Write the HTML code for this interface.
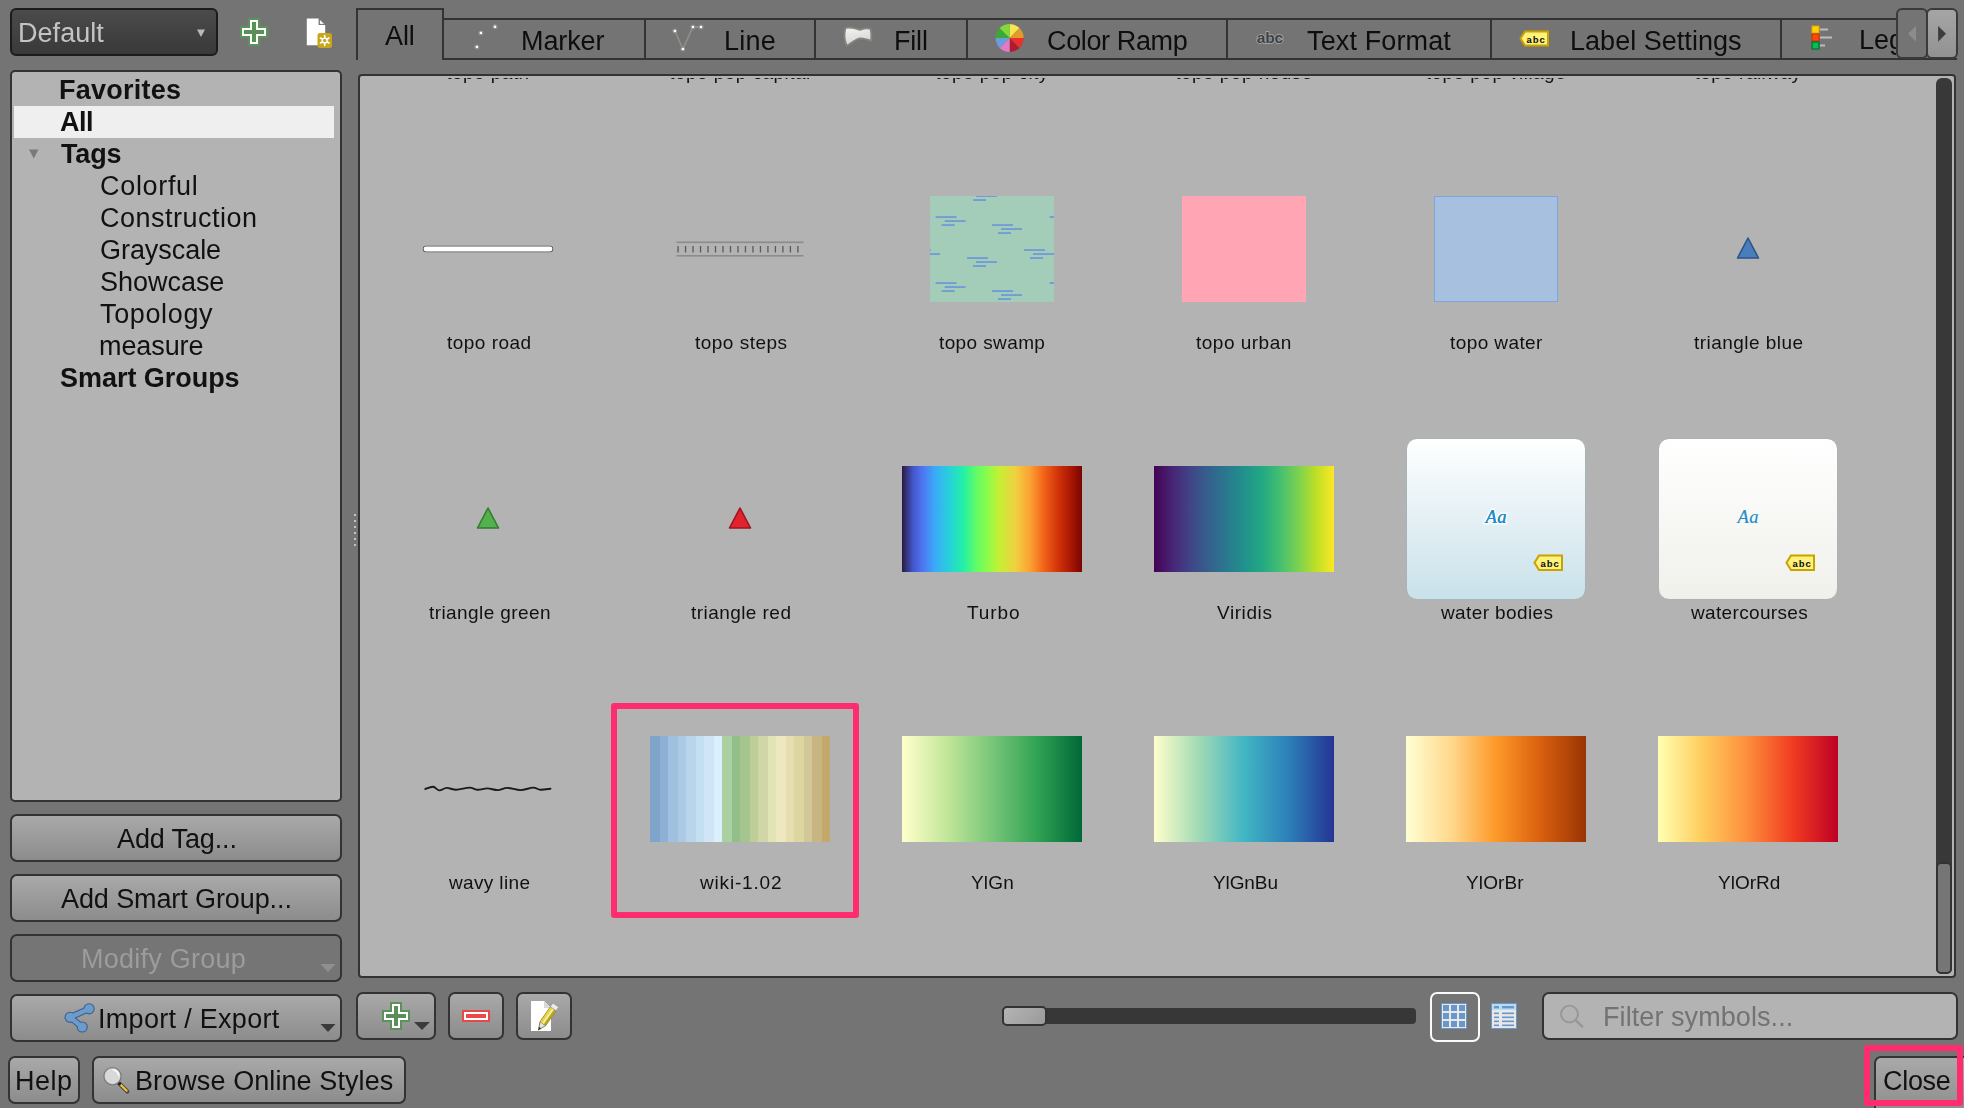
<!DOCTYPE html>
<html><head><meta charset="utf-8"><title>Style Manager</title>
<style>
html,body{margin:0;padding:0;}
body{width:1964px;height:1108px;overflow:hidden;position:relative;background:#747474;font-family:"Liberation Sans", sans-serif;}
.t{position:absolute;white-space:nowrap;will-change:transform;}
</style></head><body>
<div style="position:absolute;left:10px;top:8px;width:208px;height:48px;box-sizing:border-box;border:2px solid #1c1c1c;border-radius:6px;background:linear-gradient(#4b4b4b,#393939);"></div>
<div class="t" style="left:17.94px;top:20.00px;font-size:27px;line-height:27px;font-weight:400;color:#c4c4c4;letter-spacing:0.045px;">Default</div>
<svg style="position:absolute;left:196px;top:28px" width="10" height="10"><path d="M1 1.5 L9 1.5 L5 9 Z" fill="#b9b9b9"/></svg>
<svg style="position:absolute;left:240px;top:18px" width="28" height="28"><polygon points="8.0,0.0 20.0,0.0 20.0,8.0 28.0,8.0 28.0,20.0 20.0,20.0 20.0,28.0 8.0,28.0 8.0,20.0 0.0,20.0 0.0,8.0 8.0,8.0" fill="#5b925b"/><polygon points="10.0,2.0 18.0,2.0 18.0,10.0 26.0,10.0 26.0,18.0 18.0,18.0 18.0,26.0 10.0,26.0 10.0,18.0 2.0,18.0 2.0,10.0 10.0,10.0" fill="#ffffff"/><polygon points="12.0,4.0 16.0,4.0 16.0,12.0 24.0,12.0 24.0,16.0 16.0,16.0 16.0,24.0 12.0,24.0 12.0,16.0 4.0,16.0 4.0,12.0 12.0,12.0" fill="#5a8f5a"/></svg>
<svg style="position:absolute;left:305px;top:17px" width="30" height="33">
<path d="M1.8 1.4 H13.6 V7.9 H20.2 V28.3 H1.8 Z" fill="#ffffff"/>
<path d="M14.5 2.2 L14.5 7.3 L19.9 7.3 Z" fill="#fff" stroke="#606060" stroke-width="0.6" stroke-linejoin="round"/>
<rect x="12.5" y="16" width="14.5" height="15" rx="2.5" fill="#c9a51c"/>
<g stroke="#fff" stroke-width="1.6" stroke-linecap="round"><line x1="19.7" y1="18.5" x2="19.7" y2="28.5"/><line x1="15.4" y1="21" x2="24" y2="26"/><line x1="15.4" y1="26" x2="24" y2="21"/></g>
<circle cx="19.7" cy="23.5" r="2.4" fill="#c9a51c" stroke="#fff" stroke-width="1.4"/>
</svg>
<div style="position:absolute;left:356px;top:58px;width:1601px;height:2px;background:#333;"></div>
<div style="position:absolute;left:356px;top:8px;width:88px;height:52px;box-sizing:border-box;border:2px solid #333;border-bottom:none;background:#747474;"></div>
<div class="t" style="left:385.34px;top:22.90px;font-size:27px;line-height:27px;font-weight:400;color:#0e0e0e;letter-spacing:-0.071px;">All</div>
<div style="position:absolute;left:442px;top:18px;width:1456px;height:2px;background:#333;"></div>
<div style="position:absolute;left:644px;top:18px;width:2px;height:42px;background:#333;"></div>
<div style="position:absolute;left:814px;top:18px;width:2px;height:42px;background:#333;"></div>
<div style="position:absolute;left:966px;top:18px;width:2px;height:42px;background:#333;"></div>
<div style="position:absolute;left:1226px;top:18px;width:2px;height:42px;background:#333;"></div>
<div style="position:absolute;left:1490px;top:18px;width:2px;height:42px;background:#333;"></div>
<div style="position:absolute;left:1780px;top:18px;width:2px;height:42px;background:#333;"></div>
<svg style="position:absolute;left:468px;top:18px" width="36" height="36"><circle cx="27" cy="8.8" r="2.5" fill="#8f918b"/><rect x="25.9" y="7.700000000000001" width="2.2" height="2.2" fill="#fff"/><circle cx="12.9" cy="14.9" r="2.5" fill="#8f918b"/><rect x="11.8" y="13.8" width="2.2" height="2.2" fill="#fff"/><circle cx="8.9" cy="28.9" r="2.5" fill="#8f918b"/><rect x="7.800000000000001" y="27.799999999999997" width="2.2" height="2.2" fill="#fff"/></svg>
<div class="t" style="left:521.44px;top:27.60px;font-size:27px;line-height:27px;font-weight:400;color:#0e0e0e;letter-spacing:-0.112px;">Marker</div>
<svg style="position:absolute;left:666px;top:18px" width="42" height="40"><polyline points="8.9,13 16.9,31 26.9,9 35,9" fill="none" stroke="#8c8e88" stroke-width="1.8"/><circle cx="8.9" cy="13" r="2.5" fill="#8f918b"/><rect x="7.800000000000001" y="11.9" width="2.2" height="2.2" fill="#fff"/><circle cx="16.9" cy="31" r="2.5" fill="#8f918b"/><rect x="15.799999999999999" y="29.9" width="2.2" height="2.2" fill="#fff"/><circle cx="26.9" cy="9" r="2.5" fill="#8f918b"/><rect x="25.799999999999997" y="7.9" width="2.2" height="2.2" fill="#fff"/><circle cx="35" cy="9" r="2.5" fill="#8f918b"/><rect x="33.9" y="7.9" width="2.2" height="2.2" fill="#fff"/></svg>
<div class="t" style="left:723.54px;top:27.80px;font-size:27px;line-height:27px;font-weight:400;color:#0e0e0e;letter-spacing:0.229px;">Line</div>
<svg style="position:absolute;left:840px;top:24px" width="36" height="26">
<defs><linearGradient id="fg" x1="0" y1="0" x2="0.3" y2="1"><stop offset="0" stop-color="#f4f4f4"/><stop offset="1" stop-color="#d4d4d4"/></linearGradient></defs>
<path d="M5.5 4 C10 2.6 15 4 20 5.8 C24 4.5 27 4 30.5 4.8 C31.6 9 31.6 13 31.2 16.6 C27 16 24 14.3 20.5 14.3 C16 14.5 11 19.5 6.7 21.8 C4.3 16 4 9 5.5 4 Z" fill="url(#fg)" stroke="#85857d" stroke-width="1.8" stroke-linejoin="round"/></svg>
<div class="t" style="left:893.54px;top:27.80px;font-size:27px;line-height:27px;font-weight:400;color:#0e0e0e;letter-spacing:-0.193px;">Fill</div>
<svg style="position:absolute;left:990px;top:18px" width="40" height="40"><path d="M19.6 20 L19.60 6.00 A14 14 0 0 1 29.50 10.10 Z" fill="#f7e64e"/><path d="M19.6 20 L29.50 10.10 A14 14 0 0 1 33.60 20.00 Z" fill="#e39a2c"/><path d="M19.6 20 L33.60 20.00 A14 14 0 0 1 29.50 29.90 Z" fill="#e8302e"/><path d="M19.6 20 L29.50 29.90 A14 14 0 0 1 19.60 34.00 Z" fill="#b01b2d"/><path d="M19.6 20 L19.60 34.00 A14 14 0 0 1 9.70 29.90 Z" fill="#e37ac9"/><path d="M19.6 20 L9.70 29.90 A14 14 0 0 1 5.60 20.00 Z" fill="#6d9cdc"/><path d="M19.6 20 L5.60 20.00 A14 14 0 0 1 9.70 10.10 Z" fill="#3aa93a"/><path d="M19.6 20 L9.70 10.10 A14 14 0 0 1 19.60 6.00 Z" fill="#83d93a"/></svg>
<div class="t" style="left:1046.51px;top:27.80px;font-size:27px;line-height:27px;font-weight:400;color:#0e0e0e;letter-spacing:-0.369px;">Color Ramp</div>
<svg style="position:absolute;left:1254px;top:26px" width="32" height="20"><text x="2.8" y="16.6" font-family="Liberation Sans" font-weight="700" font-size="15.5" fill="#3a4045" stroke="#a8aca8" stroke-width="1.5" paint-order="stroke" letter-spacing="-0.2">abc</text></svg>
<div class="t" style="left:1306.67px;top:27.80px;font-size:27px;line-height:27px;font-weight:400;color:#0e0e0e;letter-spacing:0.134px;">Text Format</div>
<svg style="position:absolute;left:1519px;top:29.5px" width="31" height="17.5"><path d="M6 1.5 H29 V15.5 H6 L1.5 8.5 Z" fill="#fff27a" stroke="#c9a200" stroke-width="2"/><text x="10.1 16.6 23.1" y="12.9" text-anchor="middle" font-family="Liberation Mono" font-weight="700" font-size="9.8" fill="#111">abc</text></svg>
<div class="t" style="left:1570.04px;top:27.80px;font-size:27px;line-height:27px;font-weight:400;color:#0e0e0e;letter-spacing:0.031px;">Label Settings</div>
<svg style="position:absolute;left:1810px;top:24px" width="24" height="28">
<rect x="2" y="2" width="7" height="7" fill="#ffd200" stroke="#e8a000" stroke-width="1"/>
<rect x="2" y="10" width="7" height="7" fill="#ff4a00" stroke="#c83000" stroke-width="1"/>
<rect x="2" y="18" width="7" height="7" fill="#00c050" stroke="#006030" stroke-width="1"/>
<rect x="10" y="4.5" width="8" height="2" fill="#bdbdbd"/><rect x="10" y="12.5" width="12" height="2" fill="#bdbdbd"/><rect x="10" y="20.5" width="5" height="2" fill="#bdbdbd"/></svg>
<div style="position:absolute;left:1836px;top:20px;width:60px;height:38px;overflow:hidden;"><div class="t" style="left:23px;top:7.14px;font-size:27px;line-height:27px;font-weight:400;color:#0e0e0e;letter-spacing:0px;font-family:'Liberation Sans', sans-serif;">Legend</div></div>
<div style="position:absolute;left:1896px;top:8px;width:32px;height:51px;box-sizing:border-box;border:2px solid #3a3a3a;border-radius:6px;background:#747474;"></div>
<div style="position:absolute;left:1926px;top:8px;width:32px;height:51px;box-sizing:border-box;border:2px solid #3a3a3a;border-radius:6px;background:linear-gradient(#a5a5a5,#929292);"></div>
<svg style="position:absolute;left:1906px;top:24px" width="12" height="20"><path d="M10 1.9 L10 17.7 L2.1 9.8 Z" fill="#8c8c8c"/></svg>
<svg style="position:absolute;left:1936px;top:24px" width="12" height="20"><path d="M2.1 1.9 L2.1 17.7 L10 9.8 Z" fill="#3c3c3c"/></svg>
<div style="position:absolute;left:10px;top:70px;width:332px;height:732px;box-sizing:border-box;border:2px solid #333;border-radius:5px;background:#b3b3b3;"></div>
<div style="position:absolute;left:14px;top:106px;width:320px;height:32px;background:#efefef;"></div>
<div class="t" style="left:59.23px;top:77.00px;font-size:27px;line-height:27px;font-weight:700;color:#111;letter-spacing:0.257px;">Favorites</div>
<div class="t" style="left:60.20px;top:109.00px;font-size:27px;line-height:27px;font-weight:700;color:#111;letter-spacing:-0.514px;">All</div>
<div class="t" style="left:61.03px;top:141.00px;font-size:27px;line-height:27px;font-weight:700;color:#111;letter-spacing:-0.182px;">Tags</div>
<div class="t" style="left:100.41px;top:173.00px;font-size:27px;line-height:27px;font-weight:400;color:#111;letter-spacing:0.683px;">Colorful</div>
<div class="t" style="left:100.01px;top:205.00px;font-size:27px;line-height:27px;font-weight:400;color:#111;letter-spacing:0.484px;">Construction</div>
<div class="t" style="left:100.01px;top:237.00px;font-size:27px;line-height:27px;font-weight:400;color:#111;letter-spacing:-0.05px;">Grayscale</div>
<div class="t" style="left:100.01px;top:269.00px;font-size:27px;line-height:27px;font-weight:400;color:#111;letter-spacing:-0.029px;">Showcase</div>
<div class="t" style="left:100.37px;top:301.00px;font-size:27px;line-height:27px;font-weight:400;color:#111;letter-spacing:0.637px;">Topology</div>
<div class="t" style="left:99.21px;top:333.00px;font-size:27px;line-height:27px;font-weight:400;color:#111;letter-spacing:-0.097px;">measure</div>
<div class="t" style="left:59.91px;top:365.00px;font-size:27px;line-height:27px;font-weight:700;color:#111;letter-spacing:-0.039px;">Smart Groups</div>
<svg style="position:absolute;left:28px;top:148px" width="12" height="12"><path d="M1 1.5 L10.5 1.5 L5.75 10.5 Z" fill="#7a7a7a"/></svg>
<div style="position:absolute;left:10px;top:814px;width:332px;height:48px;box-sizing:border-box;border:2px solid #333;border-radius:7px;background:linear-gradient(#a9a9a9,#8c8c8c);"></div>
<div class="t" style="left:116.74px;top:825.50px;font-size:27px;line-height:27px;font-weight:400;color:#111;letter-spacing:-0.128px;">Add Tag...</div>
<div style="position:absolute;left:10px;top:874px;width:332px;height:48px;box-sizing:border-box;border:2px solid #333;border-radius:7px;background:linear-gradient(#a9a9a9,#8c8c8c);"></div>
<div class="t" style="left:61.14px;top:885.50px;font-size:27px;line-height:27px;font-weight:400;color:#111;letter-spacing:-0.101px;">Add Smart Group...</div>
<div style="position:absolute;left:10px;top:934px;width:332px;height:48px;box-sizing:border-box;border:2px solid #333;border-radius:7px;background:#757575;"></div>
<div class="t" style="left:81.14px;top:945.50px;font-size:27px;line-height:27px;font-weight:400;color:#9c9c9c;letter-spacing:0.25px;">Modify Group</div>
<svg style="position:absolute;left:320px;top:963px" width="16" height="10"><path d="M0.5 1 L15.5 1 L8 9 Z" fill="#8f8f8f"/></svg>
<div style="position:absolute;left:10px;top:994px;width:332px;height:48px;box-sizing:border-box;border:2px solid #333;border-radius:7px;background:linear-gradient(#a9a9a9,#8c8c8c);"></div>
<div class="t" style="left:98.29px;top:1006.00px;font-size:27px;line-height:27px;font-weight:400;color:#111;letter-spacing:0.302px;">Import / Export</div>
<svg style="position:absolute;left:320px;top:1023px" width="16" height="10"><path d="M0.5 1 L15.5 1 L8 9 Z" fill="#3a3a3a"/></svg>
<svg style="position:absolute;left:62px;top:1000px" width="34" height="36">
<g stroke="#3e5f86" stroke-width="6.6" stroke-linecap="round"><line x1="8.1" y1="17.3" x2="27.1" y2="8.8"/><line x1="8.1" y1="17.3" x2="20.2" y2="27"/></g>
<g fill="#3e5f86"><circle cx="27.1" cy="8.8" r="5.6"/><circle cx="8.1" cy="17.3" r="5.6"/><circle cx="20.2" cy="27" r="5.6"/></g>
<g stroke="#6c9bcd" stroke-width="4.4" stroke-linecap="round"><line x1="8.1" y1="17.3" x2="27.1" y2="8.8"/><line x1="8.1" y1="17.3" x2="20.2" y2="27"/></g>
<g fill="#6c9bcd"><circle cx="27.1" cy="8.8" r="4.5"/><circle cx="8.1" cy="17.3" r="4.5"/><circle cx="20.2" cy="27" r="4.5"/></g></svg>
<div style="position:absolute;left:354px;top:514px;width:2px;height:2px;background:#c3c3c3;"></div>
<div style="position:absolute;left:354px;top:520px;width:2px;height:2px;background:#c3c3c3;"></div>
<div style="position:absolute;left:354px;top:526px;width:2px;height:2px;background:#c3c3c3;"></div>
<div style="position:absolute;left:354px;top:532px;width:2px;height:2px;background:#c3c3c3;"></div>
<div style="position:absolute;left:354px;top:538px;width:2px;height:2px;background:#c3c3c3;"></div>
<div style="position:absolute;left:354px;top:544px;width:2px;height:2px;background:#c3c3c3;"></div>
<div style="position:absolute;left:358px;top:74px;width:1598px;height:904px;box-sizing:border-box;border:2px solid #333;border-radius:4px;background:#b3b3b3;"></div>
<div style="position:absolute;left:1936px;top:78px;width:16px;height:896px;background:#383838;border-radius:6px;"></div>
<div style="position:absolute;left:1936px;top:862px;width:16px;height:112px;box-sizing:border-box;border:2px solid #333;border-radius:5px;background:#767676;"></div>
<div style="position:absolute;left:360px;top:78px;width:1576px;height:898px;overflow:hidden;"><div style="position:absolute;left:-360px;top:-78px;width:1964px;height:1108px;"><div class="t" style="left:447.03px;top:333.00px;font-size:19px;line-height:19px;font-weight:400;color:#111;letter-spacing:0.482px;">topo road</div><div class="t" style="left:695.13px;top:333.00px;font-size:19px;line-height:19px;font-weight:400;color:#111;letter-spacing:0.487px;">topo steps</div><div class="t" style="left:938.83px;top:333.00px;font-size:19px;line-height:19px;font-weight:400;color:#111;letter-spacing:0.385px;">topo swamp</div><div class="t" style="left:1196.33px;top:333.00px;font-size:19px;line-height:19px;font-weight:400;color:#111;letter-spacing:0.494px;">topo urban</div><div class="t" style="left:1450.43px;top:333.00px;font-size:19px;line-height:19px;font-weight:400;color:#111;letter-spacing:0.407px;">topo water</div><div class="t" style="left:1694.23px;top:333.00px;font-size:19px;line-height:19px;font-weight:400;color:#111;letter-spacing:0.468px;">triangle blue</div><div class="t" style="left:428.53px;top:603.00px;font-size:19px;line-height:19px;font-weight:400;color:#111;letter-spacing:0.413px;">triangle green</div><div class="t" style="left:691.23px;top:603.00px;font-size:19px;line-height:19px;font-weight:400;color:#111;letter-spacing:0.445px;">triangle red</div><div class="t" style="left:966.61px;top:603.00px;font-size:19px;line-height:19px;font-weight:400;color:#111;letter-spacing:0.884px;">Turbo</div><div class="t" style="left:1216.64px;top:603.00px;font-size:19px;line-height:19px;font-weight:400;color:#111;letter-spacing:0.582px;">Viridis</div><div class="t" style="left:1441.27px;top:603.00px;font-size:19px;line-height:19px;font-weight:400;color:#111;letter-spacing:0.386px;">water bodies</div><div class="t" style="left:1690.67px;top:603.00px;font-size:19px;line-height:19px;font-weight:400;color:#111;letter-spacing:0.341px;">watercourses</div><div class="t" style="left:448.87px;top:873.00px;font-size:19px;line-height:19px;font-weight:400;color:#111;letter-spacing:0.351px;">wavy line</div><div class="t" style="left:700.47px;top:873.00px;font-size:19px;line-height:19px;font-weight:400;color:#111;letter-spacing:0.823px;">wiki-1.02</div><div class="t" style="left:971.26px;top:873.00px;font-size:19px;line-height:19px;font-weight:400;color:#111;letter-spacing:0.174px;">YlGn</div><div class="t" style="left:1212.66px;top:873.00px;font-size:19px;line-height:19px;font-weight:400;color:#111;letter-spacing:-0.105px;">YlGnBu</div><div class="t" style="left:1466.46px;top:873.00px;font-size:19px;line-height:19px;font-weight:400;color:#111;letter-spacing:0.134px;">YlOrBr</div><div class="t" style="left:1717.66px;top:873.00px;font-size:19px;line-height:19px;font-weight:400;color:#111;letter-spacing:0.024px;">YlOrRd</div><div class="t" style="left:-12px;width:1000px;text-align:center;top:63.11px;font-size:19px;line-height:19px;font-weight:400;color:#111;letter-spacing:0.45px;font-family:'Liberation Sans', sans-serif;">topo path</div><div class="t" style="left:240px;width:1000px;text-align:center;top:63.11px;font-size:19px;line-height:19px;font-weight:400;color:#111;letter-spacing:0.45px;font-family:'Liberation Sans', sans-serif;">topo pop capital</div><div class="t" style="left:492px;width:1000px;text-align:center;top:63.11px;font-size:19px;line-height:19px;font-weight:400;color:#111;letter-spacing:0.45px;font-family:'Liberation Sans', sans-serif;">topo pop city</div><div class="t" style="left:744px;width:1000px;text-align:center;top:63.11px;font-size:19px;line-height:19px;font-weight:400;color:#111;letter-spacing:0.45px;font-family:'Liberation Sans', sans-serif;">topo pop house</div><div class="t" style="left:996px;width:1000px;text-align:center;top:63.11px;font-size:19px;line-height:19px;font-weight:400;color:#111;letter-spacing:0.45px;font-family:'Liberation Sans', sans-serif;">topo pop village</div><div class="t" style="left:1248px;width:1000px;text-align:center;top:63.11px;font-size:19px;line-height:19px;font-weight:400;color:#111;letter-spacing:0.45px;font-family:'Liberation Sans', sans-serif;">topo railway</div><div style="position:absolute;left:902px;top:466px;width:180px;height:106px;background:linear-gradient(90deg,#2a1a40 0%,#4455c8 6%,#4f72f0 11%,#3ba8f8 18%,#28d0dc 26%,#22f0a8 34%,#60fb68 41%,#88fc4c 47%,#c4f034 54%,#f0d040 63%,#fca234 71%,#f26218 79%,#d03208 87%,#a81604 94%,#7a0403 100%);"></div><div style="position:absolute;left:1154px;top:466px;width:180px;height:106px;background:linear-gradient(90deg,#440154,#482475,#414487,#355f8d,#2a788e,#21918c,#22a884,#44bf70,#7ad151,#bddf26,#fde725);"></div><div style="position:absolute;left:902px;top:736px;width:180px;height:106px;background:linear-gradient(90deg,#ffffcc,#c2e699,#78c679,#31a354,#006837);"></div><div style="position:absolute;left:1154px;top:736px;width:180px;height:106px;background:linear-gradient(90deg,#ffffcc,#a1dab4,#41b6c4,#2c7fb8,#253494);"></div><div style="position:absolute;left:1406px;top:736px;width:180px;height:106px;background:linear-gradient(90deg,#ffffd4,#fed98e,#fe9929,#d95f0e,#993404);"></div><div style="position:absolute;left:1658px;top:736px;width:180px;height:106px;background:linear-gradient(90deg,#ffffb2,#fecc5c,#fd8d3c,#f03b20,#bd0026);"></div><div style="position:absolute;left:650px;top:736px;width:10px;height:106px;background:#7fa6ca;"></div><div style="position:absolute;left:660px;top:736px;width:8px;height:106px;background:#8fb0d5;"></div><div style="position:absolute;left:668px;top:736px;width:10px;height:106px;background:#9fc1df;"></div><div style="position:absolute;left:678px;top:736px;width:8px;height:106px;background:#accae6;"></div><div style="position:absolute;left:686px;top:736px;width:10px;height:106px;background:#b9d5ec;"></div><div style="position:absolute;left:696px;top:736px;width:8px;height:106px;background:#c5dff2;"></div><div style="position:absolute;left:704px;top:736px;width:10px;height:106px;background:#d0e5f8;"></div><div style="position:absolute;left:714px;top:736px;width:8px;height:106px;background:#dbeffc;"></div><div style="position:absolute;left:722px;top:736px;width:10px;height:106px;background:#aad0a2;"></div><div style="position:absolute;left:732px;top:736px;width:8px;height:106px;background:#92bf89;"></div><div style="position:absolute;left:740px;top:736px;width:10px;height:106px;background:#a4c58e;"></div><div style="position:absolute;left:750px;top:736px;width:8px;height:106px;background:#bfcd98;"></div><div style="position:absolute;left:758px;top:736px;width:10px;height:106px;background:#d1d6a8;"></div><div style="position:absolute;left:768px;top:736px;width:8px;height:106px;background:#e1e4b5;"></div><div style="position:absolute;left:776px;top:736px;width:10px;height:106px;background:#ede8bf;"></div><div style="position:absolute;left:786px;top:736px;width:8px;height:106px;background:#e6ddb1;"></div><div style="position:absolute;left:794px;top:736px;width:10px;height:106px;background:#ddd6a0;"></div><div style="position:absolute;left:804px;top:736px;width:8px;height:106px;background:#d1c797;"></div><div style="position:absolute;left:812px;top:736px;width:10px;height:106px;background:#c8b582;"></div><div style="position:absolute;left:822px;top:736px;width:8px;height:106px;background:#c2a86a;"></div><div style="position:absolute;left:1182px;top:196px;width:124px;height:106px;background:#ffa5b4;"></div><div style="position:absolute;left:1434px;top:196px;width:124px;height:106px;box-sizing:border-box;border:1.5px solid #7ea6dc;background:#a8c0df;"></div><svg style="position:absolute;left:930px;top:196px" width="124" height="106"><rect width="124" height="106" fill="#a4cdb9"/><g fill="#6b98d8"><rect x="5.6" y="20.2" width="21" height="1.7"/><rect x="14.6" y="24.2" width="21" height="1.7"/><rect x="11.6" y="28.2" width="13" height="1.7"/><rect x="62.0" y="28.2" width="21" height="1.7"/><rect x="71.0" y="32.2" width="21" height="1.7"/><rect x="68.0" y="36.2" width="13" height="1.7"/><rect x="37.0" y="61.2" width="21" height="1.7"/><rect x="46.0" y="65.2" width="21" height="1.7"/><rect x="43.0" y="69.2" width="13" height="1.7"/><rect x="37.0" y="-4.8" width="21" height="1.7"/><rect x="46.0" y="-0.8" width="21" height="1.7"/><rect x="43.0" y="3.2" width="13" height="1.7"/><rect x="94.0" y="53.2" width="21" height="1.7"/><rect x="103.0" y="57.2" width="21" height="1.7"/><rect x="100.0" y="61.2" width="13" height="1.7"/><rect x="-20.0" y="53.2" width="21" height="1.7"/><rect x="-11.0" y="57.2" width="21" height="1.7"/><rect x="-14.0" y="61.2" width="13" height="1.7"/><rect x="119.6" y="20.2" width="21" height="1.7"/><rect x="128.6" y="24.2" width="21" height="1.7"/><rect x="125.6" y="28.2" width="13" height="1.7"/><rect x="5.6" y="86.2" width="21" height="1.7"/><rect x="14.6" y="90.2" width="21" height="1.7"/><rect x="11.6" y="94.2" width="13" height="1.7"/><rect x="62.0" y="94.2" width="21" height="1.7"/><rect x="71.0" y="98.2" width="21" height="1.7"/><rect x="68.0" y="102.2" width="13" height="1.7"/><rect x="119.6" y="86.2" width="21" height="1.7"/><rect x="128.6" y="90.2" width="21" height="1.7"/><rect x="125.6" y="94.2" width="13" height="1.7"/></g></svg><svg style="position:absolute;left:420px;top:242px" width="136" height="14"><line x1="6" y1="7" x2="130" y2="7" stroke="#555" stroke-width="6.4" stroke-linecap="round"/><line x1="6" y1="7" x2="130" y2="7" stroke="#fff" stroke-width="4.8" stroke-linecap="round"/></svg><svg style="position:absolute;left:676px;top:240px" width="128" height="18"><g fill="#8c8c8c"><rect x="0.5" y="1.5" width="127" height="1.6"/><rect x="0.5" y="15" width="127" height="1.6"/></g><g fill="#5a5a5a"><rect x="1.40" y="6" width="1.3" height="6.5"/><rect x="8.89" y="6" width="1.3" height="6.5"/><rect x="16.38" y="6" width="1.3" height="6.5"/><rect x="23.87" y="6" width="1.3" height="6.5"/><rect x="31.36" y="6" width="1.3" height="6.5"/><rect x="38.85" y="6" width="1.3" height="6.5"/><rect x="46.34" y="6" width="1.3" height="6.5"/><rect x="53.83" y="6" width="1.3" height="6.5"/><rect x="61.32" y="6" width="1.3" height="6.5"/><rect x="68.81" y="6" width="1.3" height="6.5"/><rect x="76.30" y="6" width="1.3" height="6.5"/><rect x="83.79" y="6" width="1.3" height="6.5"/><rect x="91.28" y="6" width="1.3" height="6.5"/><rect x="98.77" y="6" width="1.3" height="6.5"/><rect x="106.26" y="6" width="1.3" height="6.5"/><rect x="113.75" y="6" width="1.3" height="6.5"/><rect x="121.24" y="6" width="1.3" height="6.5"/></g></svg><svg style="position:absolute;left:1735px;top:236px" width="26" height="25"><path d="M13 2 L23.5 22 L2.5 22 Z" fill="#4a7dbb" stroke="#2d5487" stroke-width="1.6" stroke-linejoin="round"/></svg><svg style="position:absolute;left:475px;top:506px" width="26" height="25"><path d="M13 2 L23.5 22 L2.5 22 Z" fill="#54b04e" stroke="#2f7f2f" stroke-width="1.6" stroke-linejoin="round"/></svg><svg style="position:absolute;left:727px;top:506px" width="26" height="25"><path d="M13 2 L23.5 22 L2.5 22 Z" fill="#e2222d" stroke="#9e1420" stroke-width="1.6" stroke-linejoin="round"/></svg><svg style="position:absolute;left:420px;top:780px" width="136" height="16"><path d="M5.3 9.0 C6.60 8.63 10.75 6.57 13.1 6.8 C15.45 7.03 17.13 10.22 19.4 10.4 C21.67 10.58 23.88 8.00 26.7 7.9 C29.52 7.80 32.48 9.85 36.3 9.8 C40.12 9.75 46.02 7.60 49.6 7.6 C53.18 7.60 54.83 9.67 57.8 9.8 C60.77 9.93 64.08 8.35 67.4 8.4 C70.72 8.45 74.38 10.18 77.7 10.1 C81.02 10.02 83.48 7.90 87.3 7.9 C91.12 7.90 96.30 10.15 100.6 10.1 C104.90 10.05 109.78 7.65 113.1 7.6 C116.42 7.55 117.60 9.62 120.5 9.8 C123.40 9.98 128.83 8.88 130.5 8.7" fill="none" stroke="#1a1a1a" stroke-width="1.9" stroke-linecap="round"/></svg><div style="position:absolute;left:1406px;top:438px;width:180px;height:162px;box-sizing:border-box;border:1px solid #a9b4b8;border-radius:11px;background:linear-gradient(#ffffff,#c9e1ea);"></div><svg style="position:absolute;left:1476px;top:498px" width="40" height="32"><text x="20.3" y="24.9" text-anchor="middle" font-family="Liberation Serif" font-style="italic" font-size="18.5" fill="#1d8cc8" stroke="#ffffff" stroke-width="3.2" stroke-linejoin="round" paint-order="stroke" letter-spacing="0.6">Aa</text><text x="20.3" y="24.9" text-anchor="middle" font-family="Liberation Serif" font-style="italic" font-size="18.5" fill="#1d8cc8" stroke="#1d8cc8" stroke-width="0.15" letter-spacing="0.6">Aa</text></svg><svg style="position:absolute;left:1533px;top:554px" width="31" height="18"><path d="M6 1.5 H29 V16 H6 L1.5 8.75 Z" fill="#fff27a" stroke="#c9a200" stroke-width="2"/><text x="10.1 16.6 23.1" y="13.4" text-anchor="middle" font-family="Liberation Mono" font-weight="700" font-size="9.8" fill="#111">abc</text></svg><div style="position:absolute;left:1658px;top:438px;width:180px;height:162px;box-sizing:border-box;border:1px solid #a9b4b8;border-radius:11px;background:linear-gradient(#ffffff,#f0f0eb);"></div><svg style="position:absolute;left:1728px;top:498px" width="40" height="32"><text x="20.3" y="24.9" text-anchor="middle" font-family="Liberation Serif" font-style="italic" font-size="18.5" fill="#1d8cc8" stroke="#1d8cc8" stroke-width="0.15" stroke-linejoin="round" paint-order="stroke" letter-spacing="0.6">Aa</text></svg><svg style="position:absolute;left:1785px;top:554px" width="31" height="18"><path d="M6 1.5 H29 V16 H6 L1.5 8.75 Z" fill="#fff27a" stroke="#c9a200" stroke-width="2"/><text x="10.1 16.6 23.1" y="13.4" text-anchor="middle" font-family="Liberation Mono" font-weight="700" font-size="9.8" fill="#111">abc</text></svg></div></div>
<div style="position:absolute;left:611px;top:703px;width:248px;height:215px;box-sizing:border-box;border:6px solid #ff2d6f;border-radius:3px;"></div>
<div style="position:absolute;left:356px;top:992px;width:80px;height:48px;box-sizing:border-box;border:2px solid #333;border-radius:7px;background:linear-gradient(#a9a9a9,#8c8c8c);"></div>
<svg style="position:absolute;left:382px;top:1002px" width="28" height="28"><polygon points="8.0,0.0 20.0,0.0 20.0,8.0 28.0,8.0 28.0,20.0 20.0,20.0 20.0,28.0 8.0,28.0 8.0,20.0 0.0,20.0 0.0,8.0 8.0,8.0" fill="#5b925b"/><polygon points="10.0,2.0 18.0,2.0 18.0,10.0 26.0,10.0 26.0,18.0 18.0,18.0 18.0,26.0 10.0,26.0 10.0,18.0 2.0,18.0 2.0,10.0 10.0,10.0" fill="#ffffff"/><polygon points="12.0,4.0 16.0,4.0 16.0,12.0 24.0,12.0 24.0,16.0 16.0,16.0 16.0,24.0 12.0,24.0 12.0,16.0 4.0,16.0 4.0,12.0 12.0,12.0" fill="#5a8f5a"/></svg>
<svg style="position:absolute;left:413px;top:1021px" width="18" height="10"><path d="M1 1 L17 1 L9 9 Z" fill="#3c3c3c"/></svg>
<div style="position:absolute;left:448px;top:992px;width:56px;height:48px;box-sizing:border-box;border:2px solid #333;border-radius:7px;background:linear-gradient(#a9a9a9,#8c8c8c);"></div>
<svg style="position:absolute;left:461px;top:1009px" width="30" height="14"><rect x="1" y="1" width="28" height="12" fill="#e84848"/><rect x="3" y="3" width="24" height="8" fill="#fff"/><rect x="5" y="5" width="20" height="4" fill="#e84848"/></svg>
<div style="position:absolute;left:516px;top:992px;width:56px;height:48px;box-sizing:border-box;border:2px solid #333;border-radius:7px;background:linear-gradient(#a9a9a9,#8c8c8c);"></div>
<svg style="position:absolute;left:528px;top:998px" width="34" height="36">
<path d="M3 3 H16 L23 10 V33 H3 Z" fill="#fff"/>
<path d="M16 3 V10 H23 Z" fill="#d9d9d9"/>
<g transform="translate(10.4,32.1) rotate(-55.3)">
<polygon points="0,0 8,-3.5 8,3.5" fill="#e9e2d2" stroke="#5a5a5a" stroke-width="0.7"/>
<polygon points="0,0 3,-1.3 3,1.3" fill="#2a2a2a"/>
<rect x="8" y="-3.5" width="18" height="7" fill="#d6bf2c" stroke="#8c7c12" stroke-width="0.7"/>
<rect x="8" y="-3.1" width="18" height="2" fill="#e8d443"/>
<rect x="8" y="-1" width="18" height="2" fill="#f6f0a4"/>
<rect x="8" y="1.2" width="18" height="2" fill="#b9a321"/>
<rect x="26" y="-3.5" width="4.5" height="7" fill="#ececec" stroke="#9a9a9a" stroke-width="0.7"/>
</g></svg>
<div style="position:absolute;left:1002px;top:1008px;width:414px;height:16px;background:#373737;border-radius:4px;"></div>
<div style="position:absolute;left:1002px;top:1006px;width:45px;height:20px;box-sizing:border-box;border:2px solid #333;border-radius:5px;background:linear-gradient(135deg,#b4b4b4,#9a9a9a);"></div>
<div style="position:absolute;left:1430px;top:992px;width:50px;height:50px;box-sizing:border-box;border:2px solid #fafafa;border-radius:7px;"></div>
<svg style="position:absolute;left:1440px;top:1002px" width="28" height="28"><rect x="1" y="1" width="26" height="26" fill="#6a97cb"/><rect x="2" y="2" width="24" height="24" fill="#e8e8e8"/><rect x="3" y="3" width="6" height="6" fill="#6a97cb"/><rect x="3" y="11" width="6" height="6" fill="#6a97cb"/><rect x="3" y="19" width="6" height="6" fill="#6a97cb"/><rect x="11" y="3" width="6" height="6" fill="#6a97cb"/><rect x="11" y="11" width="6" height="6" fill="#6a97cb"/><rect x="11" y="19" width="6" height="6" fill="#6a97cb"/><rect x="19" y="3" width="6" height="6" fill="#6a97cb"/><rect x="19" y="11" width="6" height="6" fill="#6a97cb"/><rect x="19" y="19" width="6" height="6" fill="#6a97cb"/></svg>
<svg style="position:absolute;left:1490px;top:1002px" width="28" height="28"><rect x="1" y="1" width="26" height="26" fill="#6a97cb"/><rect x="2" y="2" width="24" height="24" fill="#e8e8e8"/><rect x="2" y="2" width="24" height="6" fill="#b9dcf3"/><rect x="4" y="4" width="5" height="2.4" fill="#6a97cb"/><rect x="12" y="4" width="12" height="2.4" fill="#6a97cb"/><rect x="4" y="10.5" width="5" height="1.6" fill="#6a97cb"/><rect x="12" y="10.5" width="12" height="1.6" fill="#6a97cb"/><rect x="4" y="14.5" width="5" height="1.6" fill="#6a97cb"/><rect x="12" y="14.5" width="12" height="1.6" fill="#6a97cb"/><rect x="4" y="18.5" width="5" height="1.6" fill="#6a97cb"/><rect x="12" y="18.5" width="12" height="1.6" fill="#6a97cb"/><rect x="4" y="22.5" width="5" height="1.6" fill="#6a97cb"/><rect x="12" y="22.5" width="12" height="1.6" fill="#6a97cb"/></svg>
<div style="position:absolute;left:1542px;top:992px;width:416px;height:48px;box-sizing:border-box;border:2px solid #333;border-radius:7px;background:#b3b3b3;"></div>
<svg style="position:absolute;left:1556px;top:1000px" width="32" height="32"><circle cx="13.5" cy="14" r="8.4" fill="none" stroke="#979797" stroke-width="1.9"/><line x1="19.6" y1="20.1" x2="26.2" y2="26.7" stroke="#979797" stroke-width="2.4" stroke-linecap="round"/></svg>
<div class="t" style="left:1603.34px;top:1004.00px;font-size:27px;line-height:27px;font-weight:400;color:#737373;letter-spacing:0.078px;">Filter symbols...</div>
<div style="position:absolute;left:8px;top:1056px;width:72px;height:48px;box-sizing:border-box;border:2px solid #333;border-radius:7px;background:linear-gradient(#a9a9a9,#8c8c8c);"></div>
<div class="t" style="left:15.04px;top:1067.90px;font-size:27px;line-height:27px;font-weight:400;color:#111;letter-spacing:0.47px;">Help</div>
<div style="position:absolute;left:92px;top:1056px;width:314px;height:48px;box-sizing:border-box;border:2px solid #333;border-radius:7px;background:linear-gradient(#a9a9a9,#8c8c8c);"></div>
<div class="t" style="left:134.94px;top:1067.50px;font-size:27px;line-height:27px;font-weight:400;color:#111;letter-spacing:0.087px;">Browse Online Styles</div>
<svg style="position:absolute;left:100px;top:1064px" width="32" height="32">
<line x1="19.2" y1="19.4" x2="27.3" y2="27.4" stroke="#4a4a4a" stroke-width="4.2" stroke-linecap="round"/>
<line x1="20.6" y1="20.8" x2="26.6" y2="26.7" stroke="#f0c62c" stroke-width="2.2" stroke-linecap="round"/>
<circle cx="19.5" cy="19.7" r="1.6" fill="#222"/>
<circle cx="12.5" cy="12.2" r="8.6" fill="#d8d8d8" stroke="#7c7c7c" stroke-width="1.3"/>
<path d="M13.5 5.8 A6.6 6.6 0 0 1 18.6 11.5" fill="none" stroke="#f8f8f8" stroke-width="1.8" stroke-linecap="round"/></svg>
<div style="position:absolute;left:1874px;top:1056px;width:100px;height:60px;box-sizing:border-box;border:2px solid #333;border-radius:7px;background:linear-gradient(#a9a9a9,#8c8c8c);"></div>
<div class="t" style="left:1882.51px;top:1067.80px;font-size:27px;line-height:27px;font-weight:400;color:#111;letter-spacing:-0.297px;">Close</div>
<div style="position:absolute;left:1864px;top:1045px;width:99px;height:61px;box-sizing:border-box;border:6px solid #ff2d6f;border-radius:3px;"></div>
</body></html>
